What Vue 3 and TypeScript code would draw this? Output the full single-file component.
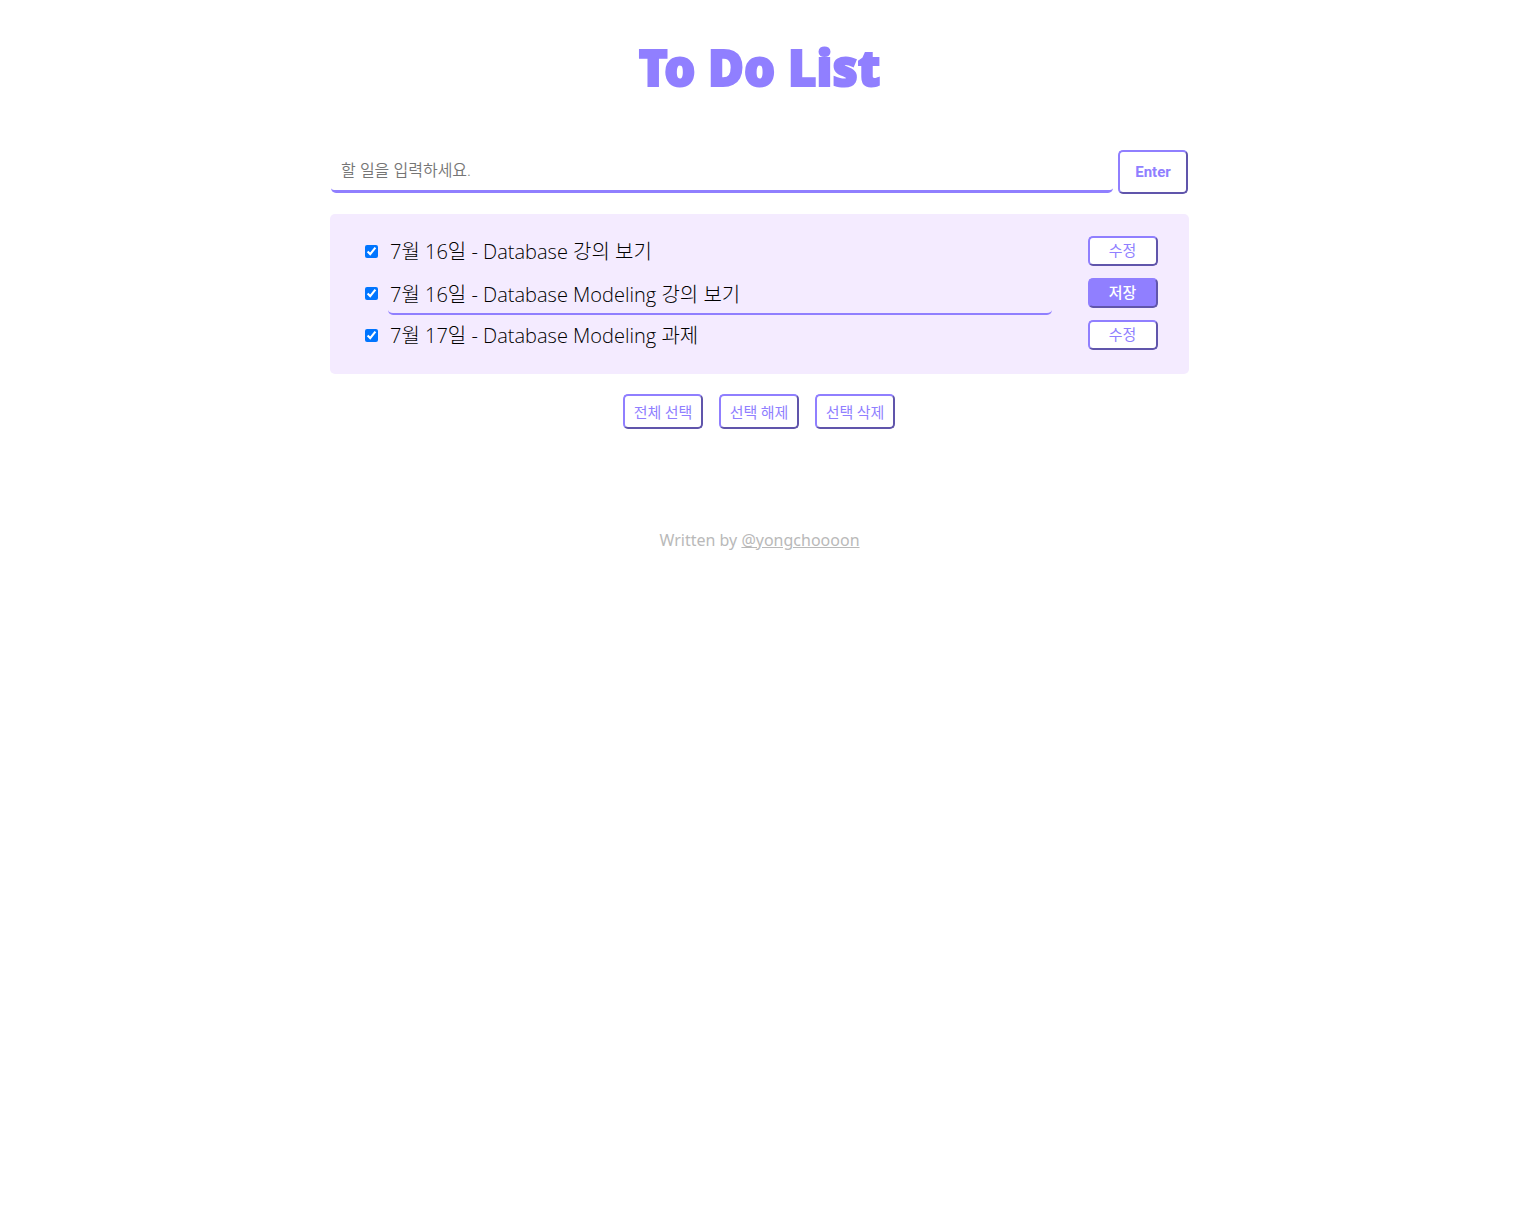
<script setup lang="ts">
import { ref } from 'vue'

interface Todo {
  id: number
  text: string
  done: boolean
  editing: boolean
}

const draft = ref('')
const todos = ref<Todo[]>([
  { id: 1, text: '7월 16일 - Database 강의 보기', done: true, editing: false },
  { id: 2, text: '7월 16일 - Database Modeling 강의 보기', done: true, editing: true },
  { id: 3, text: '7월 17일 - Database Modeling 과제', done: true, editing: false },
])

function add() {
  const text = draft.value.trim()
  if (!text) return
  todos.value.push({ id: Date.now(), text, done: false, editing: false })
  draft.value = ''
}

function setAll(done: boolean) {
  todos.value.forEach((todo) => (todo.done = done))
}

function removeDone() {
  todos.value = todos.value.filter((todo) => !todo.done)
}
</script>

<template>
  <div class="page">
    <main class="app">
      <h1 class="title">To Do List</h1>
      <form class="entry" @submit.prevent="add">
        <input v-model="draft" class="entry-input" type="text" placeholder="할 일을 입력하세요." aria-label="할 일" />
        <button class="btn enter" type="submit">Enter</button>
      </form>
      <ul class="list">
        <li v-for="todo in todos" :key="todo.id" class="row">
          <input :id="`todo-${todo.id}`" v-model="todo.done" class="check" type="checkbox" :aria-label="todo.text" />
          <input v-if="todo.editing" v-model="todo.text" class="text edit" type="text" aria-label="할 일 수정" />
          <label v-else class="text" :for="`todo-${todo.id}`">{{ todo.text }}</label>
          <button class="btn small" :class="{ save: todo.editing }" type="button" @click="todo.editing = !todo.editing">
            {{ todo.editing ? '저장' : '수정' }}
          </button>
        </li>
      </ul>
      <div class="actions">
        <button class="btn" type="button" @click="setAll(true)">전체 선택</button>
        <button class="btn" type="button" @click="setAll(false)">선택 해제</button>
        <button class="btn" type="button" @click="removeDone">선택 삭제</button>
      </div>
    </main>
    <footer class="footer">Written by <a href="#">@yongchoooon</a></footer>
  </div>
</template>

<style>
body {
  margin: 0;
  background: #fff;
}
</style>

<style scoped>
.page {
  padding: 40px 0 40px 3px;
  font-family: 'Open Sans', 'Noto Sans CJK KR', sans-serif;
}

.app {
  width: 100%;
  max-width: 859px;
  margin: 0 auto;
}

.title {
  margin: 0 0 56px;
  font-family: 'Noto Sans', sans-serif;
  font-size: 49px;
  font-weight: 900;
  line-height: 54px;
  text-align: center;
  color: #907fff;
  -webkit-text-stroke: 2px #907fff;
}

.entry {
  display: flex;
  gap: 5px;
  height: 44px;
  padding: 0 1px;
  margin-bottom: 20px;
}

.entry-input {
  flex: 1;
  min-width: 0;
  box-sizing: border-box;
  height: 43px;
  padding: 0 10px;
  border: 0;
  border-bottom: 3px solid #907fff;
  border-radius: 5px;
  background: #fff;
  font-family: 'Open Sans', 'Noto Sans CJK KR', sans-serif;
  font-size: 16px;
  font-weight: 350;
  outline: none;
}

.entry-input::placeholder {
  color: #757575;
}

.btn {
  box-sizing: border-box;
  width: 80px;
  height: 35px;
  padding: 0;
  border: 2px outset #907fff;
  border-radius: 5px;
  background: #fff;
  color: #907fff;
  font-family: 'Noto Sans CJK KR', sans-serif;
  font-size: 15px;
  font-weight: 400;
  line-height: 20px;
  cursor: pointer;
}

.enter {
  width: 70px;
  height: 44px;
  font-family: Roboto, sans-serif;
  font-weight: 700;
}

.list {
  margin: 0;
  padding: 16px 31px 18px 35px;
  border-radius: 5px;
  background: #f4ebff;
  list-style: none;
}

.row {
  display: flex;
  align-items: center;
  height: 42px;
}

.check {
  width: 13px;
  height: 13px;
  margin: 0 10px 0 0;
}

.text {
  flex: 1;
  min-width: 0;
  box-sizing: border-box;
  height: 44px;
  margin-right: 36px;
  padding: 2px 2px 0;
  border: 0 solid transparent;
  border-bottom-width: 2px;
  color: #000;
  font-family: 'Open Sans', 'Noto Sans CJK KR', sans-serif;
  font-size: 20px;
  font-weight: 300;
  line-height: 42px;
}

.edit {
  border-color: #907fff;
  border-radius: 5px;
  background: transparent;
  outline: none;
}

.small {
  width: 70px;
  height: 30px;
  padding: 0 1px 2px 0;
}

.save {
  background: #907fff;
  color: #fff;
  font-weight: 500;
}

.actions {
  display: flex;
  justify-content: center;
  gap: 16px;
  margin: 20px 1px 0 0;
}

.footer {
  margin-top: 99px;
  font-family: 'Noto Sans', sans-serif;
  font-size: 16px;
  font-weight: 400;
  line-height: 24px;
  text-align: center;
  color: #b9b9b9;
}

.footer a {
  color: inherit;
}
</style>
